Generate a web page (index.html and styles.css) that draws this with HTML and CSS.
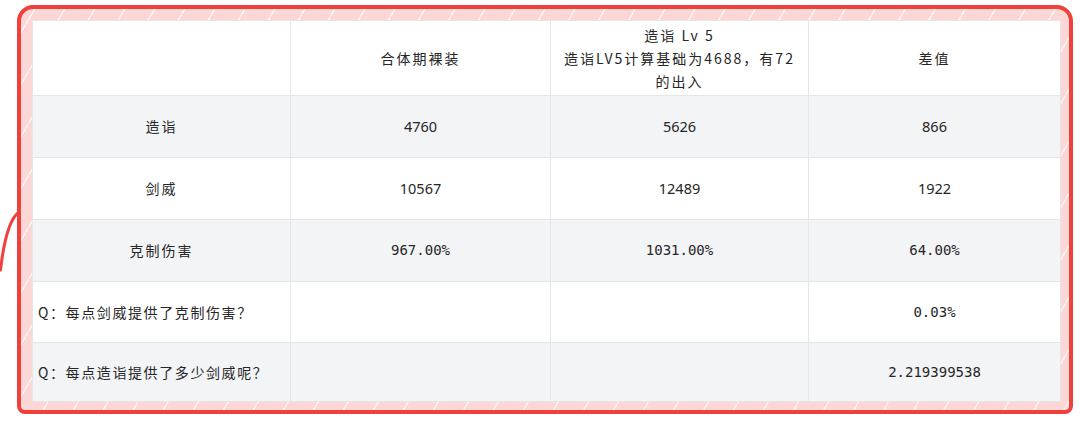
FILE: index.html
```html
<!DOCTYPE html>
<html lang="zh">
<head>
<meta charset="utf-8">
<title>造诣对比</title>
<link rel="stylesheet" href="styles.css">
</head>
<body>
<div class="stage">
  <svg class="scribble" width="24" height="80" viewBox="0 0 24 80" aria-hidden="true">
    <path d="M0.5 62 C 3 40, 8 12, 19 4" fill="none" stroke="#f0403c" stroke-width="3" stroke-linecap="round"/>
  </svg>
  <div class="frame">
    <table class="grid">
      <colgroup>
        <col class="c1"><col class="c2"><col class="c3"><col class="c4">
      </colgroup>
      <tr class="head">
        <td></td>
        <td class="cjk">合体期裸装</td>
        <td class="cjk">造诣 Lv 5<br>造诣LV5计算基础为4688，有72<br>的出入</td>
        <td class="cjk">差值</td>
      </tr>
      <tr class="alt">
        <td class="cjk">造诣</td>
        <td class="num">4760</td>
        <td class="num">5626</td>
        <td class="num">866</td>
      </tr>
      <tr>
        <td class="cjk">剑威</td>
        <td class="num">10567</td>
        <td class="num">12489</td>
        <td class="num">1922</td>
      </tr>
      <tr class="alt">
        <td class="cjk">克制伤害</td>
        <td class="dec">967.00%</td>
        <td class="dec">1031.00%</td>
        <td class="dec">64.00%</td>
      </tr>
      <tr class="q1">
        <td class="cjk ask">Q：每点剑威提供了克制伤害？</td>
        <td></td>
        <td></td>
        <td class="dec">0.03%</td>
      </tr>
      <tr class="alt q2">
        <td class="cjk ask">Q：每点造诣提供了多少剑威呢？</td>
        <td></td>
        <td></td>
        <td class="dec">2.219399538</td>
      </tr>
    </table>
  </div>
</div>
</body>
</html>
```

FILE: styles.css
```css
html, body {
  margin: 0;
  padding: 0;
  background: #ffffff;
}

.stage {
  position: relative;
  width: 1080px;
  height: 424px;
  padding: 5px 0 0 17px;
  box-sizing: border-box;
}

.scribble {
  position: absolute;
  left: 0;
  top: 208px;
}

.frame {
  width: 1056px;
  height: 409px;
  box-sizing: border-box;
  border: 4px solid #f0403c;
  border-radius: 16px 16px 8px 8px;
  padding: 11px 9px 8px 11px;
  background-color: #fdd6d6;
  background-image: repeating-linear-gradient(120deg, rgba(255,255,255,0) 0 11px, rgba(255,255,255,0.7) 11px 12.5px, rgba(255,255,255,0) 12.5px 26px);
}

.grid {
  width: 1028px;
  table-layout: fixed;
  border-collapse: collapse;
  background: #ffffff;
  color: #262626;
  font-family: "Noto Sans", "Noto Sans CJK SC", sans-serif;
  font-size: 14px;
}

.c1 { width: 258px; }
.c2 { width: 260px; }
.c3 { width: 258px; }
.c4 { width: 252px; }

.grid td {
  border: 1px solid #e4e6ea;
  text-align: center;
  vertical-align: middle;
  padding: 0;
  height: 61px;
  line-height: 23px;
}

.grid tr.head td { height: 74px; }
.grid tr.q1 td { height: 60px; }
.grid tr.q2 td { height: 58px; }

.grid tr.alt td { background: #f3f4f6; }

.cjk {
  font-family: "Noto Sans CJK SC", sans-serif;
  letter-spacing: 2px;
}

.grid td.ask {
  text-align: left;
  padding-left: 5px;
  letter-spacing: 1.6px;
}

.num {
  font-family: "Noto Sans", sans-serif;
  font-size: 14.5px;
}

.dec {
  font-family: "DejaVu Sans Mono", monospace;
  font-size: 14px;
}
```
